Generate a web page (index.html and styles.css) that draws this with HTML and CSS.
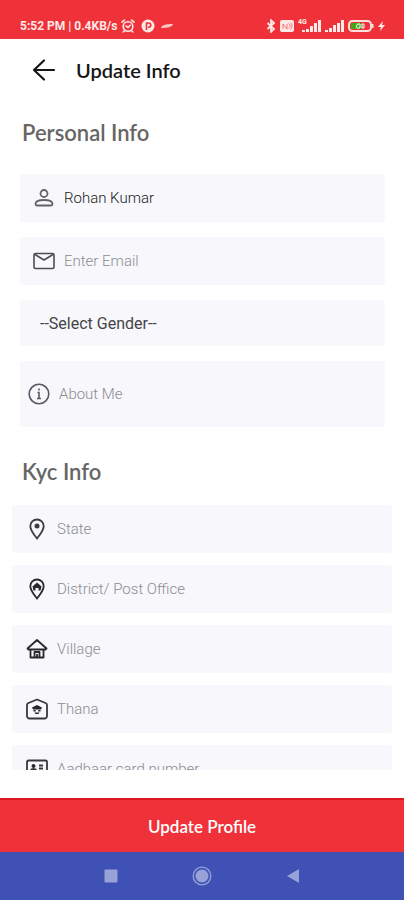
FILE: index.html
```html
<!DOCTYPE html>
<html lang="en">
<head>
    <meta charset="UTF-8">
    <meta name="viewport" content="width=device-width, initial-scale=1.0">
    <title>Update Info</title>
    <link rel="stylesheet" href="styles.css">
</head>
<body>

    <!-- Status bar -->
    <div class="status-bar">
        <div class="status-left">
            <span>5:52 PM | 0.4KB/s</span>
            <svg width="14" height="14" viewBox="0 0 14 14" fill="none" stroke="currentColor" stroke-width="1.6" stroke-linecap="round">
                <circle cx="7" cy="7.5" r="4.8"/>
                <path d="M1 3.2 3.4 1.2M13 3.2 10.6 1.2M3.2 12 2.2 13M10.8 12l1 1M5 7l2 1.5 2.2-2.2"/>
            </svg>
            <svg class="app-icon" width="14" height="14" viewBox="0 0 14 14">
                <circle cx="7" cy="7" r="6.5" fill="currentColor"/>
                <path d="M5.5 11V4h2.2a2 2 0 0 1 0 4.2H7" fill="none" stroke="#ef3239" stroke-width="1.6"/>
            </svg>
            <svg width="13" height="6" viewBox="0 0 13 6">
                <path d="M0 5C1 2 4 1 12 1 11 4 7 5 0 5Z" fill="currentColor" opacity=".8"/>
            </svg>
        </div>
        <div class="status-right">
            <svg width="10" height="14" viewBox="0 0 10 14" fill="none" stroke="currentColor" stroke-width="1.8">
                <path d="M1.5 4 8 10 5 12.8V1.2L8 4 1.5 10"/>
            </svg>
            <svg width="14" height="12" viewBox="0 0 14 12">
                <rect width="14" height="12" rx="2" fill="currentColor"/>
                <path d="M3 9V4l4 5V4M8.500 3.500c2 1.200 2 3.500 0 5M10.500 2.500c2 2 2 5 0 7" fill="none" stroke="#ef3239" stroke-width=".9" opacity=".7"/>
            </svg>
            <span class="signal">
                <span class="network">4G</span>
                <svg width="19" height="12" viewBox="0 0 19 12" fill="currentColor">
                    <path d="M0 10h3v2H0zM4 9h3v3H4zM8 6h3v6H8zM12 3h3v9h-3zM16 0h3v12h-3z"/>
                </svg>
            </span>
            <svg width="19" height="12" viewBox="0 0 19 12" fill="currentColor">
                <path d="M0 10h3v2H0zM4 8h3v4H4zM8 5h3v7H8zM12 3h3v9h-3zM16 0h3v12h-3z"/>
            </svg>
            <svg width="26" height="12" viewBox="0 0 26 12">
                <rect x="1" y="1" width="22" height="10" rx="3.5" fill="none" stroke="#fde0dc" stroke-width="2"/>
                <path d="M24 4h1.5v4H24z" fill="#fde0dc"/>
                <rect x="3" y="3" width="11" height="6" fill="#43a816"/>
                <path d="M8 7.5 9.5 4H12v4H8.500M14 4h2v4h-2z" fill="none" stroke="#fff"/>
            </svg>
            <svg width="7" height="12" viewBox="0 0 7 12" fill="currentColor">
                <path d="M5 1 0 7h3l-1 4 5-6H4z"/>
            </svg>
        </div>
    </div>

    <header class="app-bar">
        <button class="back-button" type="button" aria-label="Back">
            <svg width="24" height="24" viewBox="0 0 24 24" fill="none" stroke="currentColor" stroke-width="2.2" stroke-linecap="round" stroke-linejoin="round">
                <path d="M22 12H2M12 2.500 2 12l10 9.500"/>
            </svg>
        </button>
        <h1>Update Info</h1>
    </header>

    <form class="profile-form" id="profileForm">
        <section class="personal">
            <h2>Personal Info</h2>

            <div class="field">
                <label for="name" aria-label="Name">
                    <svg width="24" height="24" viewBox="0 0 24 24" fill="none" stroke="#626268" stroke-width="1.8">
                        <circle cx="12" cy="7.5" r="3.5"/>
                        <path d="M5 19.500h14c1 0 1.500-.5 1.500-1.500 0-3-4-4-8.500-4s-8.500 1-8.500 4c0 1 .5 1.500 1.500 1.500z"/>
                    </svg>
                </label>
                <input type="text" id="name" value="Rohan Kumar">
            </div>

            <div class="field">
                <label for="email" aria-label="Email">
                    <svg width="24" height="24" viewBox="0 0 24 24" fill="none" stroke="#4c4c52" stroke-width="1.6" stroke-linejoin="round">
                        <rect x="2" y="4.5" width="20" height="15" rx="1.5"/>
                        <path d="m3 5.500 9 5.500 9-5.500"/>
                    </svg>
                </label>
                <input type="email" id="email" placeholder="Enter Email">
            </div>

            <select class="gender" id="gender" aria-label="Gender">
                <option>--Select Gender--</option>
                <option>Male</option>
                <option>Female</option>
                <option>Other</option>
            </select>

            <div class="field about">
                <label for="about" aria-label="About me">
                    <svg width="24" height="24" viewBox="0 0 24 24" fill="none" stroke="#5a5a60" stroke-width="1.6">
                        <circle cx="12" cy="12" r="9.8"/>
                        <path d="M10.500 10.500H12v6M10 16.500h4M12 6.500v2"/>
                    </svg>
                </label>
                <input type="text" id="about" placeholder="About Me">
            </div>
        </section>

        <section class="kyc">
            <h2>Kyc Info</h2>

            <div class="field">
                <label for="state" aria-label="State">
                    <svg width="24" height="24" viewBox="0 0 24 24" fill="none" stroke="#3c3c40" stroke-width="1.8">
                        <path d="M12 21.500C8 16.500 5.300 13 5.300 9.200a6.700 6.700 0 0 1 13.400 0C18.700 13 16 16.500 12 21.500Z"/>
                        <circle cx="12" cy="9" r="2.5" fill="#3c3c40" stroke="none"/>
                    </svg>
                </label>
                <input type="text" id="state" placeholder="State">
            </div>

            <div class="field">
                <label for="district" aria-label="District or post office">
                    <svg width="24" height="24" viewBox="0 0 24 24" fill="none" stroke="#29292c" stroke-width="1.8">
                        <path d="M12 21.500C8 16.500 5.300 13 5.300 9.200a6.700 6.700 0 0 1 13.400 0C18.700 13 16 16.500 12 21.500Z"/>
                        <path d="m7.500 9.500 4.500-4 4.500 4-1 4h-2V11h-3v2.500h-2z" fill="#29292c" stroke="none"/>
                    </svg>
                </label>
                <input type="text" id="district" placeholder="District/ Post Office">
            </div>

            <div class="field">
                <label for="village" aria-label="Village">
                    <svg width="24" height="24" viewBox="0 0 24 24" fill="none" stroke="#29292c" stroke-width="1.8" stroke-linejoin="round">
                        <path d="M12 3 2.500 11.500l1 1h17l1-1zM5.500 12.500V20.500h13v-8M9.500 20.500V15h5v5.500M12 17v3"/>
                    </svg>
                </label>
                <input type="text" id="village" placeholder="Village">
            </div>

            <div class="field">
                <label for="thana" aria-label="Thana">
                    <svg width="24" height="24" viewBox="0 0 24 24" fill="none" stroke="#38383c" stroke-width="1.8" stroke-linejoin="round">
                        <path d="M12 2.500 20.500 6c1 .4 1.500 1 1.500 2v11a2.500 2.500 0 0 1-2.500 2.500h-15A2.500 2.500 0 0 1 2 19V8c0-1 .5-1.600 1.500-2z"/>
                        <path d="m7 10.500 5-2.500 5 2.500-1 2H8zM8.500 13h2.200v1.500H8.500zM13.300 13h2.200v1.500h-2.200zM9.500 15.500h5l-1 1.500h-3z" fill="#29292c" stroke="none"/>
                    </svg>
                </label>
                <input type="text" id="thana" placeholder="Thana">
            </div>

            <div class="field">
                <label for="aadhaar" aria-label="Aadhaar card number">
                    <svg width="24" height="24" viewBox="0 0 24 24" fill="none" stroke="#38383c" stroke-width="1.8">
                        <rect x="2" y="3.5" width="20" height="17" rx="1.5"/>
                        <circle cx="8.5" cy="9" r="2" fill="#29292c" stroke="none"/>
                        <path d="M5.500 15c0-4 6-4 6 0M14 8.500h4M14 11.500h4M14 15h4"/>
                    </svg>
                </label>
                <input type="text" id="aadhaar" placeholder="Aadhaar card number">
            </div>
        </section>
    </form>

    <button class="update-button" type="submit" form="profileForm">Update Profile</button>

    <!-- Android navigation bar -->
    <nav class="nav-bar">
        <button type="button" aria-label="Recent apps">
            <svg width="20" height="20" viewBox="0 0 20 20" fill="currentColor"><rect x="3.5" y="3.5" width="13" height="13" rx="1"/></svg>
        </button>
        <button type="button" aria-label="Home">
            <svg width="20" height="20" viewBox="0 0 20 20" fill="currentColor">
                <circle cx="10" cy="10" r="6.5"/>
                <circle cx="10" cy="10" r="8.8" fill="none" stroke="currentColor" stroke-width="1.3"/>
            </svg>
        </button>
        <button type="button" aria-label="Back">
            <svg width="20" height="20" viewBox="0 0 20 20" fill="currentColor"><path d="M4 10 16 3v14z"/></svg>
        </button>
    </nav>

</body>
</html>
```
FILE: styles.css
```css
* {
    box-sizing: border-box;
    margin: 0;
    padding: 0;
}

body {
    display: flex;
    flex-direction: column;
    height: 100vh;
    background: #fff;
    font-family: 'Roboto', sans-serif;
}

button {
    border: none;
    background: none;
    cursor: pointer;
}

svg {
    display: block;
    flex-shrink: 0;
}

/* Status bar */
.status-bar {
    display: flex;
    justify-content: space-between;
    align-items: center;
    height: 39px;
    padding: 12px 19px 0 20px;
    background: #ef3239;
    color: #ffe9e7;
    font-size: 12px;
    font-weight: 700;
}

.status-left,
.status-right {
    display: flex;
    align-items: center;
    gap: 4px;
}

.app-icon {
    margin: 0 2px;
}

.signal {
    display: flex;
    position: relative;
    padding-left: 4px;
}

.network {
    position: absolute;
    top: -2px;
    left: 0;
    font-size: 7px;
    line-height: 8px;
}

/* Header */
.app-bar {
    display: flex;
    align-items: center;
    gap: 20px;
    height: 62px;
    padding: 0 32px;
}

.back-button {
    color: #151515;
}

h1,
h2,
.update-button {
    font-family: 'Lato', sans-serif;
}

h1 {
    color: #151515;
    font-size: 20px;
    font-weight: 600;
    line-height: 24px;
}

h2 {
    color: #666;
    font-size: 22px;
    font-weight: 600;
    line-height: 28px;
}

/* Form */
.profile-form {
    flex: 1;
    min-height: 0;
    margin-bottom: 28px;
    padding-top: 18px;
    overflow-y: auto;
    scrollbar-width: none;
}

.personal,
.kyc {
    display: flex;
    flex-direction: column;
}

.personal {
    gap: 15px;
    padding: 0 19px 0 20px;
}

.personal h2 {
    margin: 0 2px 12px;
}

.kyc {
    gap: 12px;
    padding: 31px 12px 0;
}

.kyc h2 {
    margin: 0 10px 7px;
}

.field {
    display: flex;
    align-items: center;
    height: 48px;
    border-radius: 3px;
    background: #f7f7fc;
}

.personal .field {
    gap: 8px;
    padding: 0 12px;
}

.personal .about {
    height: 66px;
    padding: 0 7px;
}

.kyc .field {
    gap: 8px;
    padding: 0 13px;
}

.field input {
    flex: 1;
    min-width: 0;
    border: none;
    outline: none;
    background: none;
    color: #222;
    font-family: inherit;
    font-size: 15px;
    font-weight: 300;
}

.field input::placeholder {
    color: #8c8c90;
}

.gender {
    height: 46px;
    padding: 0 20px;
    border: none;
    border-radius: 3px;
    background: #f7f7fc;
    color: #444;
    font-family: inherit;
    font-size: 16px;
    appearance: none;
}

/* Bottom buttons */
.update-button {
    height: 54px;
    border-top: 2px solid #df1820;
    background: #ef3239;
    color: #fff;
    font-size: 17px;
    font-weight: 600;
}

.nav-bar {
    display: flex;
    justify-content: center;
    align-items: center;
    gap: 71px;
    height: 48px;
    background: #3f51b5;
}

.nav-bar button {
    color: #98a2d6;
}
```
